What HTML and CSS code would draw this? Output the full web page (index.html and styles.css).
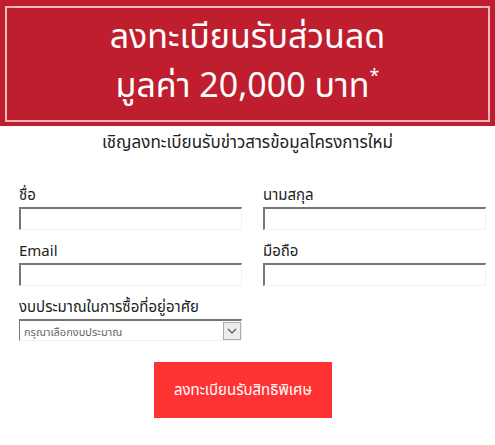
FILE: index.html
```html
<!DOCTYPE html>
<html lang="th">
<head>
    <meta charset="UTF-8">
    <title>ลงทะเบียน</title>
    <link rel="stylesheet" href="styles.css">
</head>
<body>
<section class="banner">
    <div class="banner-inner">
        <p>ลงทะเบียนรับส่วนลด</p>
        <p>มูลค่า 20,000 บาท<sup>*</sup></p>
    </div>
</section>
<p class="intro">เชิญลงทะเบียนรับข่าวสารข้อมูลโครงการใหม่</p>
<form class="form">
    <div class="row">
        <label class="field">
            <span>ชื่อ</span>
            <input type="text">
        </label>
        <label class="field">
            <span>นามสกุล</span>
            <input type="text">
        </label>
    </div>
    <div class="row">
        <label class="field">
            <span>Email</span>
            <input type="text">
        </label>
        <label class="field">
            <span>มือถือ</span>
            <input type="text">
        </label>
    </div>
    <div class="row">
        <label class="field">
            <span>งบประมาณในการซื้อที่อยู่อาศัย</span>
            <div class="select">
                <span class="select-text">กรุณาเลือกงบประมาณ</span>
                <i class="select-arrow"><svg width="10" height="6" viewBox="0 0 10 6"><path d="M1 1l4 4 4-4" fill="none" stroke="#555" stroke-width="1.2"/></svg></i>
            </div>
        </label>
    </div>
    <div class="actions">
        <button type="button" class="btn">ลงทะเบียนรับสิทธิพิเศษ</button>
    </div>
</form>
</body>
</html>
```

FILE: styles.css
```css
html,body{ margin:0; padding:0; background:#fff;}
body{ font-family:"Noto Sans Thai","Noto Sans","DejaVu Sans",sans-serif; color:#333;}
p{ margin:0;}

.banner{ background:#be1e2d; height:126px; padding:6px 5px 4px 5px; box-sizing:border-box;}
.banner-inner{
    height:100%;
    border:2px solid #f3b6bb;
    box-sizing:border-box;
    color:#fff;
    text-align:center;
    font-size:34px;
    line-height:49px;
    padding-top:5px;
}
.banner-inner sup{ font-size:18px; vertical-align:top; line-height:30px;}

.intro{ text-align:center; font-size:17px; margin-top:4px; color:#222;}

.form{ padding:30px 9px 0 19px;}
.row{ display:grid; grid-template-columns:223px 223px; column-gap:21px; margin-bottom:12px;}
.field{ display:flex; flex-direction:column;}
.field > span{ font-size:15px; line-height:20px; color:#222; margin-bottom:1px;}
.field input{
    height:23px;
    margin:0;
    padding:0;
    box-sizing:border-box;
    border-top:2px solid #767676;
    border-left:2px solid #767676;
    border-right:1px solid #f0f0f0;
    border-bottom:1px solid #f0f0f0;
    outline:none;
}

.select{
    display:flex;
    align-items:center;
    height:22px;
    border-top:2px solid #767676;
    border-left:1px solid #767676;
    border-right:1px solid #f0f0f0;
    border-bottom:1px solid #f0f0f0;
    box-sizing:border-box;
}
.select-text{ flex:1; font-size:11px; color:#666; padding-left:4px; padding-top:3px;}
.select-arrow{
    width:18px;
    height:18px;
    box-sizing:border-box;
    border:1px solid #aaa;
    background:#ececec;
    display:flex;
    align-items:center;
    justify-content:center;
}

.actions{ display:flex; justify-content:center; padding-top:9px; padding-right:19px;}
.btn{
    width:178px;
    height:56px;
    border:0;
    background:#ff3333;
    color:#fff;
    font-family:inherit;
    font-size:15px;
}
```
